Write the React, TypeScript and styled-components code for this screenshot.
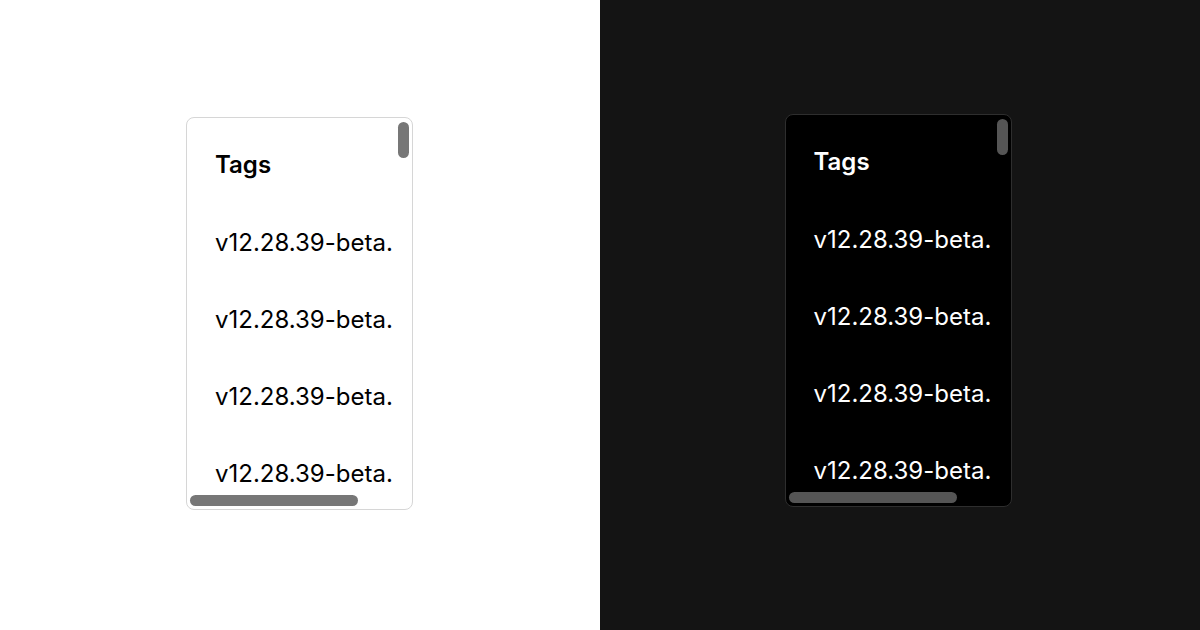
import { createGlobalStyle } from 'styled-components';
import styled from 'styled-components';

const GlobalStyle = createGlobalStyle`
  html, body { margin: 0; padding: 0; }
  body { font-family: Inter, "Noto Sans", sans-serif; }
`;

type Mode = 'light' | 'dark';

// shift nudges the centred card sideways a pixel or two, as in the shot
const palette = {
  light: { page: '#ffffff', card: '#ffffff', border: '#d6d6d6', text: '#000000', thumb: '#777777', shift: -1, top: 117 },
  dark: { page: '#141414', card: '#000000', border: '#2e2e2e', text: '#ffffff', thumb: '#555555', shift: -4, top: 114 },
};

const Page = styled.div`
  display: flex;
  width: 1200px;
  height: 630px;
`;

const Half = styled.div<{ $mode: Mode }>`
  flex: 1;
  display: flex;
  justify-content: center;
  align-items: flex-start;
  padding-top: ${(p) => palette[p.$mode].top}px;
  background: ${(p) => palette[p.$mode].page};
  box-sizing: border-box;
`;

const Card = styled.div<{ $mode: Mode }>`
  position: relative;
  width: 227px;
  height: 393px;
  margin-left: ${(p) => palette[p.$mode].shift}px;
  box-sizing: border-box;
  border: 1px solid ${(p) => palette[p.$mode].border};
  border-radius: 8px;
  background: ${(p) => palette[p.$mode].card};
  overflow: hidden;
`;

const Viewport = styled.div`
  width: 100%;
  height: 100%;
  overflow: hidden;
`;

const Content = styled.div<{ $mode: Mode }>`
  padding: 0 0 0 28px;
  color: ${(p) => palette[p.$mode].text};
`;

const Title = styled.h4`
  margin: 0;
  height: 86px;
  padding-top: 33px;
  box-sizing: border-box;
  font-size: 24px;
  line-height: 28px;
  font-weight: 600;
`;

const Tag = styled.div`
  height: 77px;
  display: flex;
  align-items: center;
  font-size: 24px;
  font-weight: 400;
  white-space: nowrap;
`;

const VThumb = styled.div<{ $mode: Mode }>`
  position: absolute;
  top: 4px;
  right: 3px;
  width: 11px;
  height: 36px;
  border-radius: 6px;
  background: ${(p) => palette[p.$mode].thumb};
`;

const HThumb = styled.div<{ $mode: Mode }>`
  position: absolute;
  left: 3px;
  bottom: 3px;
  width: 168px;
  height: 11px;
  border-radius: 6px;
  background: ${(p) => palette[p.$mode].thumb};
`;

const tags = Array.from({ length: 4 }, () => 'v12.28.39-beta.');

function TagsBox({ mode }: { mode: Mode }) {
  return (
    <Half $mode={mode}>
      <Card $mode={mode}>
        <Viewport>
          <Content $mode={mode}>
            <Title>Tags</Title>
            {tags.map((t, i) => (
              <Tag key={i}>{t}</Tag>
            ))}
          </Content>
        </Viewport>
        <VThumb $mode={mode} />
        <HThumb $mode={mode} />
      </Card>
    </Half>
  );
}

export default function App() {
  return (
    <>
      <GlobalStyle />
      <Page>
        <TagsBox mode="light" />
        <TagsBox mode="dark" />
      </Page>
    </>
  );
}
